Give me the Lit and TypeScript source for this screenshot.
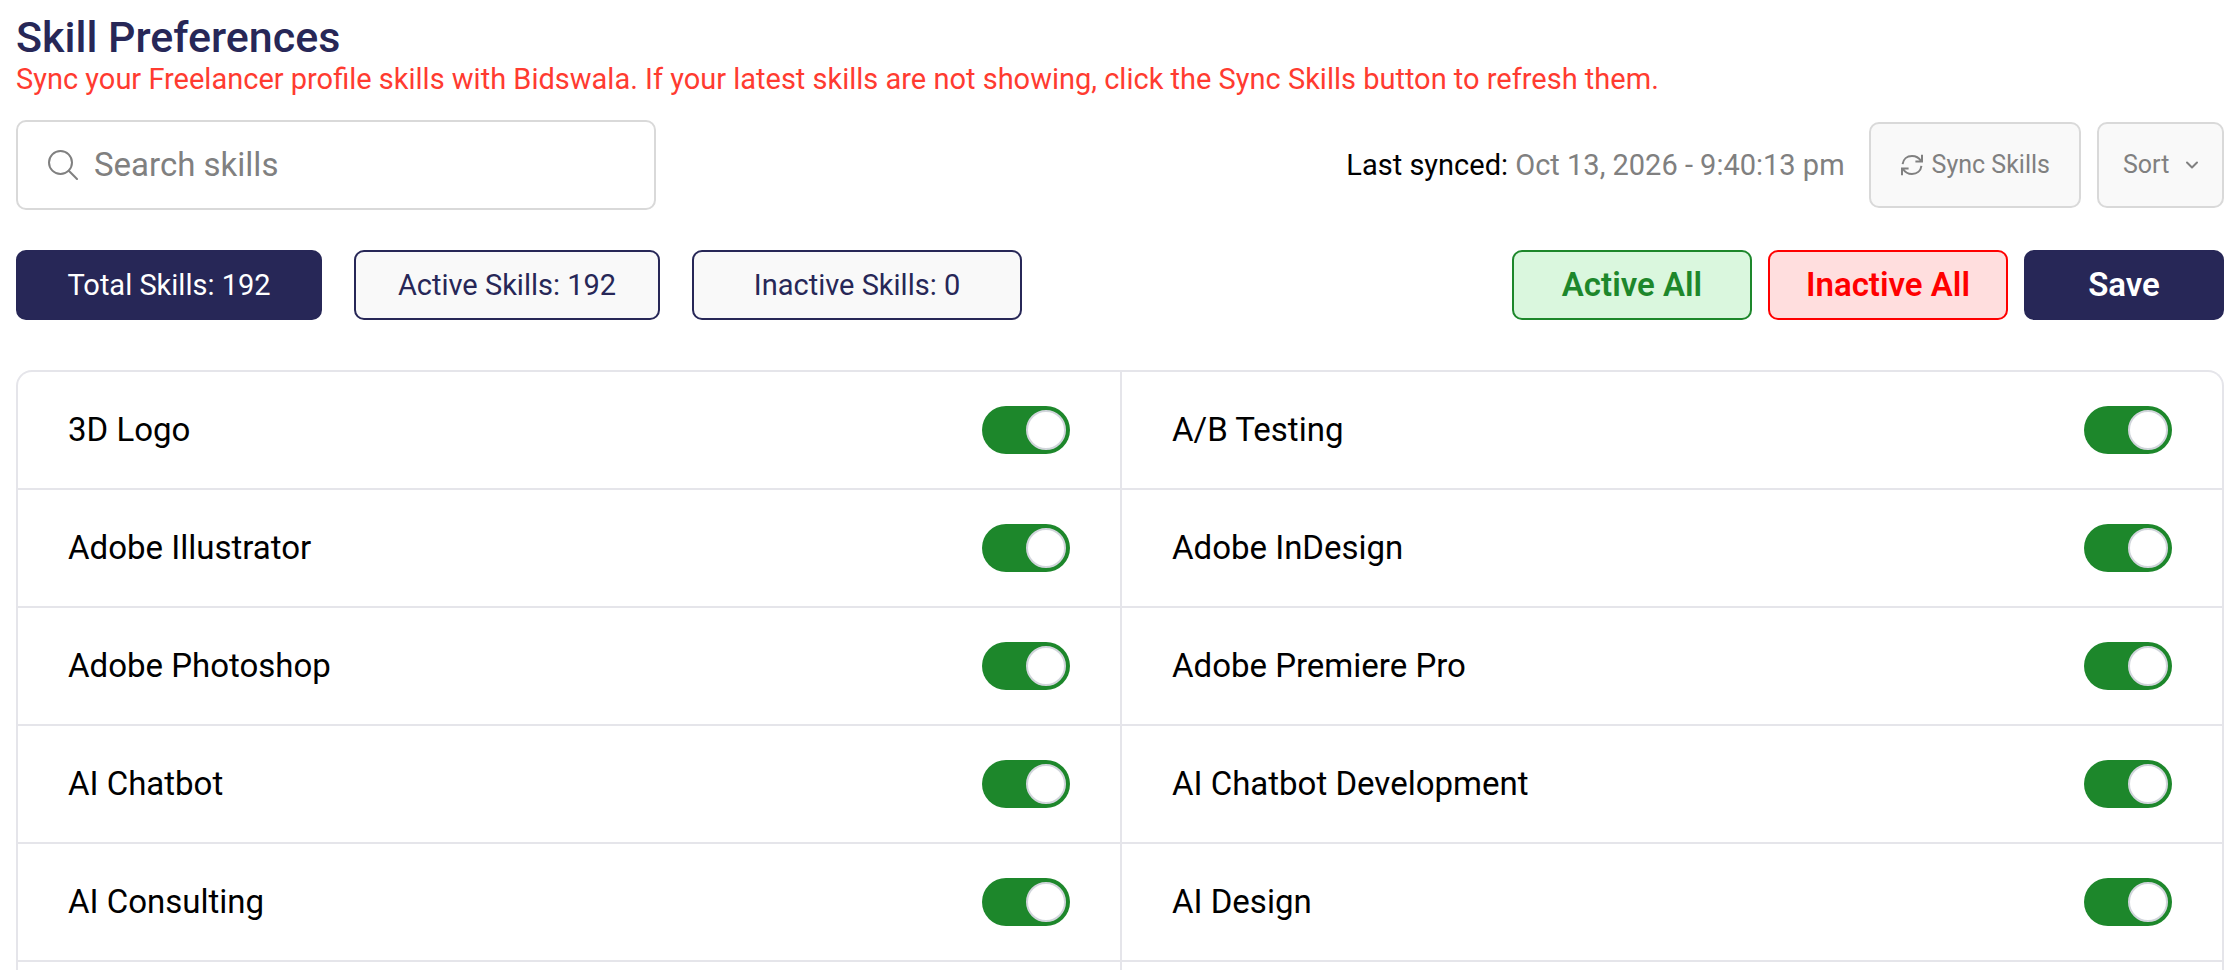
import { LitElement, html, css } from "lit";
import { customElement, state } from "lit/decorators.js";

interface Skill {
  name: string;
  active: boolean;
}

const SKILL_NAMES = [
  "3D Logo",
  "A/B Testing",
  "Adobe Illustrator",
  "Adobe InDesign",
  "Adobe Photoshop",
  "Adobe Premiere Pro",
  "AI Chatbot",
  "AI Chatbot Development",
  "AI Consulting",
  "AI Design",
];

@customElement("app-root")
export class AppRoot extends LitElement {
  static styles = css`
    :host {
      --navy: #272757;
      --green: #1d872b;
      --line: #e5e5ea;
      --grey: #808080;
      display: flex;
      flex-direction: column;
      box-sizing: border-box;
      min-height: 100vh;
      padding: 12px 16px 0;
      background: #fff;
      color: #000;
      font-family: Roboto, "Liberation Sans", sans-serif;
    }
    *,
    *::before {
      box-sizing: border-box;
    }
    button,
    input,
    select {
      font-family: inherit;
      margin: 0;
    }
    .title {
      margin: 0;
      color: var(--navy);
      font-size: 43px;
      font-weight: 500;
      line-height: 50px;
    }
    .hint {
      margin: 0;
      color: #ff3b30;
      font-size: 29px;
      line-height: 34px;
    }
    .bar {
      display: flex;
      align-items: center;
      justify-content: space-between;
      gap: 16px;
    }
    .tools {
      margin-top: 24px;
    }
    .filters {
      margin: 40px 0 50px;
    }
    .search {
      display: flex;
      align-items: center;
      gap: 16px;
      flex: 0 1 640px;
      height: 90px;
      padding: 0 30px;
      border: 2px solid #d9d9d9;
      border-radius: 10px;
    }
    .search-icon {
      flex: none;
      width: 30px;
      height: 30px;
    }
    .search-input {
      flex: 1;
      min-width: 0;
      padding: 0;
      border: 0;
      outline: 0;
      background: none;
      font-size: 33px;
      line-height: 40px;
    }
    .search-input::placeholder {
      color: var(--grey);
      opacity: 1;
    }
    .group {
      display: flex;
      align-items: center;
      gap: 16px;
    }
    .group.wide {
      gap: 32px;
    }
    .synced {
      margin: 0 8px 0 0;
      font-size: 29px;
      line-height: 34px;
      white-space: nowrap;
    }
    .synced-time {
      color: var(--grey);
    }
    .tool {
      display: flex;
      align-items: center;
      justify-content: center;
      gap: 8px;
      height: 86px;
      border: 2px solid #d9d9d9;
      border-radius: 10px;
      background: #f9f9f9;
      color: var(--grey);
      font-size: 25px;
      line-height: 32px;
      white-space: nowrap;
    }
    .sync {
      padding: 0 29px;
    }
    .sync-icon {
      width: 24px;
      height: 24px;
    }
    .sort {
      display: grid;
      align-items: center;
    }
    .sort > * {
      grid-area: 1 / 1;
    }
    .sort-select {
      appearance: none;
      width: 127px;
      padding: 0 48px 0 24px;
    }
    .sort-icon {
      justify-self: end;
      width: 14px;
      height: 10px;
      margin-right: 25px;
      pointer-events: none;
    }
    .tab,
    .action {
      height: 70px;
      padding: 0 16px;
      border: 2px solid var(--navy);
      border-radius: 10px;
      white-space: nowrap;
    }
    .tab {
      min-width: 306px;
      background: #f9f9f9;
      color: var(--navy);
      font-size: 29px;
      line-height: 34px;
    }
    .tab.roomy {
      min-width: 330px;
    }
    .tab.current {
      background: var(--navy);
      color: #fff;
    }
    .action {
      min-width: 240px;
      font-size: 33px;
      font-weight: 600;
      line-height: 40px;
    }
    .enable {
      border-color: var(--green);
      background: #daf7de;
      color: var(--green);
    }
    .disable {
      border-color: #ff0000;
      background: #ffdede;
      color: #ff0000;
    }
    .save {
      min-width: 200px;
      background: var(--navy);
      color: #fff;
    }
    .skills {
      flex: 1;
      display: grid;
      grid-template-columns: 1fr 1fr;
      grid-template-rows: repeat(5, auto) 1fr;
      margin: 0;
      padding: 0;
      list-style: none;
      border: 2px solid var(--line);
      border-bottom: 0;
      border-radius: 16px 16px 0 0;
    }
    .cell {
      border-bottom: 2px solid var(--line);
    }
    .cell:nth-child(even) {
      border-left: 2px solid var(--line);
    }
    .cell.rest {
      border-bottom: 0;
    }
    .skill {
      display: flex;
      align-items: center;
      justify-content: space-between;
      padding: 34px 50px;
      font-size: 33px;
      line-height: 40px;
      cursor: pointer;
    }
    .switch {
      appearance: none;
      flex: none;
      display: flex;
      width: 88px;
      height: 48px;
      margin: 0;
      padding: 4px;
      border-radius: 24px;
      background: #d9d9d9;
      cursor: pointer;
    }
    .switch::before {
      content: "";
      width: 40px;
      height: 40px;
      border: 2px solid #d1d5db;
      border-radius: 50%;
      background: #fff;
    }
    .switch:checked {
      justify-content: flex-end;
      background: var(--green);
    }
  `;

  @state() private skills: Skill[] = SKILL_NAMES.map((name) => ({ name, active: true }));

  private toggle(index: number) {
    this.skills = this.skills.map((s, i) => (i === index ? { ...s, active: !s.active } : s));
  }

  private setAll(active: boolean) {
    this.skills = this.skills.map((s) => ({ ...s, active }));
  }

  render() {
    return html`
      <h1 class="title">Skill Preferences</h1>
      <p class="hint">
        Sync your Freelancer profile skills with Bidswala. If your latest skills are not showing, click the Sync Skills
        button to refresh them.
      </p>

      <div class="bar tools">
        <label class="search">
          <svg class="search-icon" viewBox="0 0 30 30" fill="none" stroke="#808080" stroke-width="2" stroke-linecap="round" aria-hidden="true">
            <circle cx="12.5" cy="12.5" r="11.5" />
            <path d="M20.8 20.8 29 29" />
          </svg>
          <input class="search-input" type="search" placeholder="Search skills" aria-label="Search skills" />
        </label>
        <div class="group">
          <p class="synced">Last synced: <span class="synced-time">Oct 13, 2026 - 9:40:13 pm</span></p>
          <button class="tool sync" type="button">
            <svg class="sync-icon" viewBox="0 0 24 24" fill="none" stroke="currentColor" stroke-width="2" aria-hidden="true">
              <path d="M2.6 11.2C3.2 6.2 7 3 12 3C16 3 19 4.8 21 8" />
              <path d="M22 1.8V8.4H15.4" />
              <path d="M21.4 12.8C20.8 17.8 17 21 12 21C8 21 5 19.2 3 16" />
              <path d="M2 22.2V15.6H8.6" />
            </svg>
            Sync Skills
          </button>
          <div class="sort">
            <select class="tool sort-select" aria-label="Sort">
              <option>Sort</option>
            </select>
            <svg class="sort-icon" viewBox="0 0 14 10" fill="none" stroke="#808080" stroke-width="2" stroke-linecap="round" stroke-linejoin="round" aria-hidden="true">
              <path d="M2 2.5 7 7.5 12 2.5" />
            </svg>
          </div>
        </div>
      </div>

      <div class="bar filters">
        <div class="group wide">
          <button class="tab current" type="button">Total Skills: 192</button>
          <button class="tab" type="button">Active Skills: 192</button>
          <button class="tab roomy" type="button">Inactive Skills: 0</button>
        </div>
        <div class="group">
          <button class="action enable" type="button" @click=${() => this.setAll(true)}>Active All</button>
          <button class="action disable" type="button" @click=${() => this.setAll(false)}>Inactive All</button>
          <button class="action save" type="button">Save</button>
        </div>
      </div>

      <ul class="skills">
        ${this.skills.map(
          (skill, i) => html`
            <li class="cell">
              <label class="skill">
                <span>${skill.name}</span>
                <input class="switch" type="checkbox" role="switch" .checked=${skill.active} @change=${() => this.toggle(i)} />
              </label>
            </li>
          `
        )}
        <li class="cell rest" role="presentation"></li>
        <li class="cell rest" role="presentation"></li>
      </ul>
    `;
  }
}
